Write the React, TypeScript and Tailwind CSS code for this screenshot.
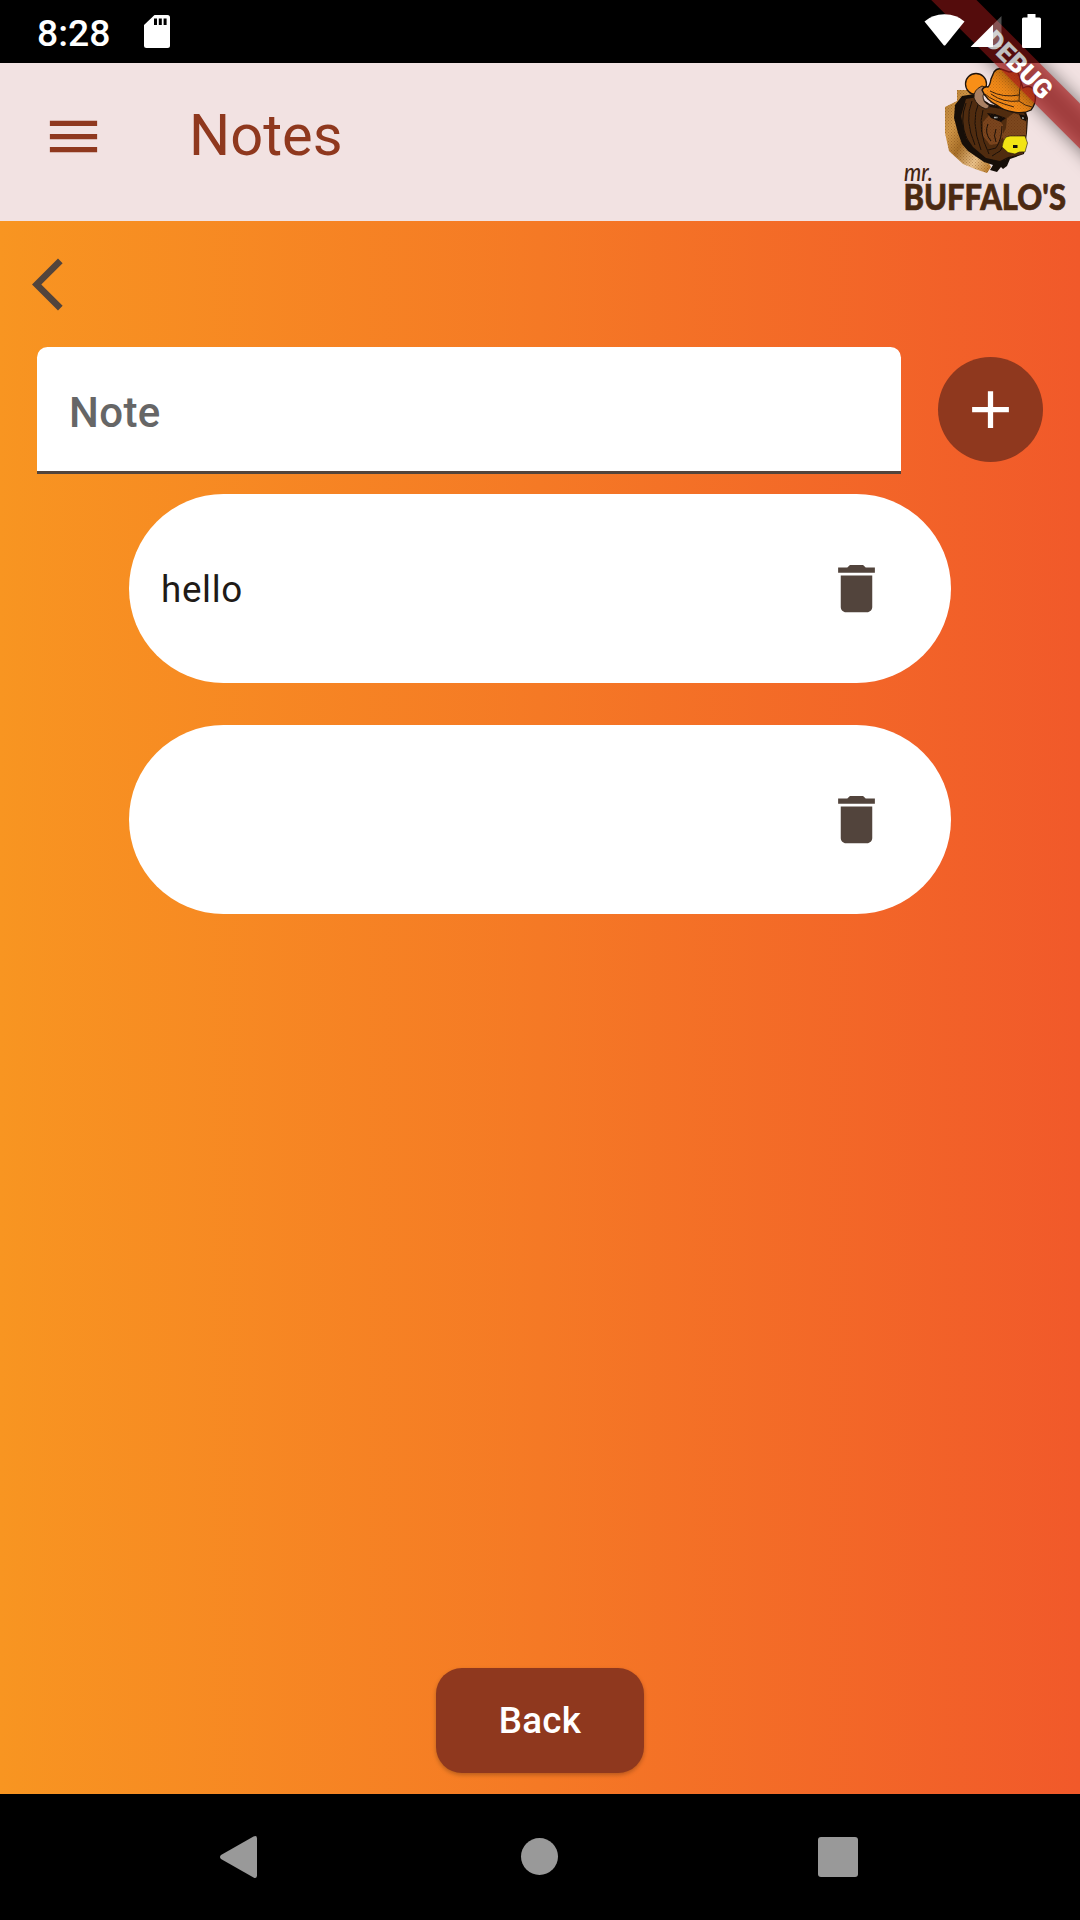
import React from "react";

function SdCard() {
  return (
    <svg width="26" height="33" viewBox="0 0 26 33" className="ml-[35px] mt-[15px] shrink-0">
      <path fill="#fff" d="M10.500 0H23.500Q26 0 26 2.500V30.500Q26 33 23.500 33H2.500Q0 33 0 30.500V10Z" />
      <path d="M11.500 3.500v6.500M16.300 3.500v6.500M21.100 3.500v6.500" stroke="#000" strokeWidth="3" />
    </svg>
  );
}

function StatusBar() {
  return (
    <div className="z-20 flex h-[63px] shrink-0 bg-black/25">
      <span className="ml-[37px] mt-[9px] h-[48px] w-[72px] text-[37.300px] font-medium leading-[48px] text-white">8:28</span>
      <SdCard />
      <svg width="120" height="63" viewBox="0 0 120 63" className="ml-auto mr-[38px]" fill="#fff">
        <path d="M2.500 21.500Q10 14.500 22.500 14.300Q35 14.500 42.500 21.500L23.500 45Q22.500 46 21.500 45Z" />
        <path d="M49 46.500L71 24.500V47H49.500Q48.300 47 49 46.500Z" />
        <path d="M71 24.500L79.500 16V47H71Z" fill="#fff" fillOpacity=".3" />
        <path d="M105.500 14H113.500V17.500H117.500Q119 17.500 119 19V46.500Q119 48 117.500 48H101.500Q100 48 100 46.500V19Q100 17.500 101.500 17.500H105.500Z" />
      </svg>
    </div>
  );
}

function BuffaloLogo() {
  return (
    <svg width="170" height="157" viewBox="900 63 170 157" className="shrink-0 overflow-visible">
      <defs>
        <linearGradient id="wood" x1="0" y1="0" x2="1" y2="1">
          <stop offset="0" stopColor="#b07a30" />
          <stop offset=".3" stopColor="#d49a4a" />
          <stop offset=".5" stopColor="#a87028" />
          <stop offset=".75" stopColor="#ecc48c" />
          <stop offset="1" stopColor="#b0701c" />
        </linearGradient>
        <pattern id="grain" width="3" height="3" patternUnits="userSpaceOnUse">
          <rect width="1" height="1" fill="#5a2606" />
          <rect x="1.500" y="1.500" width="1" height="1" fill="#5a2606" />
        </pattern>
      </defs>

      {/* wooden plaque */}
      <path d="M957 90H974L980 120L986 158L991 167L987 173L975 169L963 164L949 151L945 133V107L957 101Z" fill="url(#wood)" />
      <path d="M957 90H974L980 120L986 158L991 167L987 173L975 169L963 164L949 151L945 133V107L957 101Z" fill="url(#grain)" opacity=".3" />

      {/* mane and head */}
      <path d="M962 96L974 94L990 104L1026 112L1028 118L1027 133L1024 154L1010 159L1007 166L1003 169L1001 167L997 172L990 170L993 165L984 162L968 151L962 144L958 133L954 118L955 105Z" fill="#160e08" />
      <path d="M966 99L978 97L990 107L1024 113L1027 120L1026 136L1023 154L1008 157L1000 161L986 158L973 147L965 135L961 116Z" fill="#4f2c10" />
      <path d="M983 122L990 114L999 120L1003 125V137L997 144L990 145L983 136Z" fill="#7a451e" />
      <path d="M1007 118L1014 113L1022 116L1026 122V135L1010 137L1005 143L1002 136L1006 128Z" fill="#7d481e" />
      <path d="M966 103Q959 121 967 139M972 101Q964 120 975 145M979 102Q970 121 981 150M983 110Q977 130 989 154M988 124Q984 133 991 141M996 129Q993 136 996 142M1002 126Q1002 139 996 148L988 150M1005 143L1000 151L992 156" fill="none" stroke="#160e08" strokeWidth="1" />
      <path d="M987 113L995 114L1006 118L1001 122L991 118ZM1019 114L1027 116L1026 121L1021 119Z" fill="#120c08" />
      <path d="M994 117.500h3.500M1022 118h2" stroke="#a8b0b0" strokeWidth="1.600" />
      <path d="M965 98H985L1028 114L1026 137L1022 154L1000 162L984 157L966 140Z" fill="url(#grain)" opacity=".35" />

      {/* horn and hat */}
      <circle cx="976" cy="84" r="10.500" fill="#f98f17" stroke="#20140c" strokeWidth="1.300" />
      <path d="M982 86Q973 90 974 98Q977 106 986 109Q990 108 989 105Q983 103 983 96Q984 90 987 88Z" fill="#a98063" stroke="#20140c" strokeWidth=".9" />
      <path d="M982 90Q984 86 988 87Q990 85 991 79L994 72Q997 68 1001 69L1009 72L1016 71Q1019 73 1020 79L1023 88Q1030 84 1034 90Q1038 101 1031 110Q1024 114 1013 112Q1003 110 998 106Q986 100 982 90Z" fill="#f58c18" stroke="#20140c" strokeWidth="1.400" />
      <path d="M990 91Q1003 98 1019 95M991 94Q1003 103 1019 101M985 94Q992 101 1014 107" fill="none" stroke="#3b210e" strokeWidth="1" />
      <path d="M1021 82Q1019 92 1019 101Q1025 106 1032 107" fill="none" stroke="#3b210e" strokeWidth=".9" />
      <path d="M991 79L995 71L1019 74L1022 89L1034 92L1034 104L1028 112L1010 110L998 104L986 94Z" fill="url(#grain)" opacity=".22" />

      {/* muzzle */}
      <path d="M1006 137L1010 136H1025L1027.500 143L1025 152Q1019 151 1015 154L1008 152.500L1002 147Q1003 140 1006 137Z" fill="#f2e414" stroke="#20140c" strokeWidth=".6" />
      <path d="M1013 145h4.500v3h-4.500z" fill="#15100a" />

      <text x="904" y="180.500" fontSize="24" fontStyle="italic" fontWeight="500" textLength="29" lengthAdjust="spacingAndGlyphs" fill="#432410" fontFamily="Lato, sans-serif">mr.</text>
      <text x="903.500" y="210" fontSize="36.500" fontWeight="900" textLength="162.500" lengthAdjust="spacingAndGlyphs" fill="#4c2a12" stroke="#4c2a12" strokeWidth=".7" fontFamily="Lato, sans-serif">BUFFALO'S</text>
    </svg>
  );
}

function DebugBanner() {
  return (
    <div className="pointer-events-none absolute right-0 top-0 z-10 h-[200px] w-[200px] overflow-hidden">
      <div className="absolute left-[-13px] top-[47.250px] h-[31.500px] w-[300px] rotate-45 bg-black/50 blur-[9px]" />
      <div className="absolute left-[-13px] top-[47.250px] h-[31.500px] w-[300px] rotate-45 bg-[#b71c1c]/62 pl-[5px] text-center text-[26.200px] font-black leading-[32px] text-white">
        DEBUG
      </div>
    </div>
  );
}

function NoteCard({ text }: { text: string }) {
  return (
    <div className="flex h-[189px] w-[822px] items-center justify-between rounded-full bg-white pl-[32px] pr-[63px]">
      <span className="mt-[2px] text-[36.750px] leading-[48px] tracking-[.660px] text-[#201a17]">{text}</span>
      <svg width="63" height="63" viewBox="0 0 24 24" fill="#52443c">
        <path d="M6 19c0 1.100.9 2 2 2h8c1.100 0 2-.9 2-2V7H6v12zM19 4h-3.500l-1-1h-5l-1 1H5v2h14V4z" />
      </svg>
    </div>
  );
}

export default function App() {
  return (
    <div className="relative flex h-[1920px] w-[1080px] flex-col overflow-hidden bg-black font-['Roboto',sans-serif]">
      <StatusBar />
      <header className="flex h-[157.500px] shrink-0 bg-[#f2e2e2]">
        <svg width="63" height="63" viewBox="0 0 24 24" fill="#8f381e" className="ml-[42px] mt-[42px]">
          <path d="M3 18h18v-2H3v2zm0-5h18v-2H3v2zm0-7v2h18V6H3z" />
        </svg>
        <h1 className="ml-[84px] mt-[36px] h-[72px] text-[57.750px] leading-[72px] text-[#8f381e]">Notes</h1>
        <div className="ml-auto mr-[10px]">
          <BuffaloLogo />
        </div>
      </header>
      <main className="flex h-[1573.500px] shrink-0 flex-col bg-[linear-gradient(90deg,#f89521,#f57925_50%,#f1592a)]">
        <svg width="63" height="63" viewBox="0 0 24 24" fill="#52443c" className="ml-[31.500px] mt-[32.500px] shrink-0">
          <path d="M11.670 3.870L9.900 2.100 0 12l9.900 9.900 1.770-1.770L3.540 12z" />
        </svg>
        <div className="mt-[31px] flex h-[127px] items-center pl-[37px]">
          <div className="flex h-[127px] w-[864px] flex-col rounded-t-[10.500px] bg-white">
            <span className="mt-[34px] h-[63px] pl-[32px] text-[42px] font-medium leading-[63px] tracking-[.400px] text-[#666]">Note</span>
            <div className="mt-auto h-[2.600px] bg-[#52443c]" />
          </div>
          <button className="mb-[2px] ml-[37px] flex h-[105px] w-[105px] items-center justify-center rounded-full bg-[#8f381e]">
            <svg width="63" height="63" viewBox="0 0 24 24" fill="#fff">
              <path d="M19 13h-6v6h-2v-6H5v-2h6V5h2v6h6v2z" />
            </svg>
          </button>
        </div>
        <div className="mt-[20px] flex flex-col items-center gap-[42px]">
          <NoteCard text="hello" />
          <NoteCard text="" />
        </div>
        <button className="mb-[21.500px] mt-auto h-[105px] w-[208px] shrink-0 self-center rounded-[26px] bg-[#8f381e] pt-[2px] text-[36.750px] font-medium tracking-[.260px] text-white shadow-[0_2px_4px_rgba(0,0,0,.25)]">
          Back
        </button>
      </main>
      <nav className="flex h-[126px] shrink-0 items-center">
        <svg width="1080" height="126" viewBox="0 0 1080 126" fill="#999">
          <path d="M221 61L253.500 42.600Q257 41 257 44.500V81.500Q257 85 253.500 83.400L221 65Q219 63 221 61Z" />
          <circle cx="539.500" cy="62.500" r="18.500" />
          <rect x="818" y="43" width="40" height="40" rx="3" />
        </svg>
      </nav>
      <DebugBanner />
    </div>
  );
}
